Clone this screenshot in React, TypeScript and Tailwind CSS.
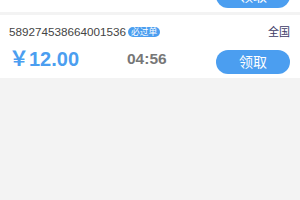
import React, { FC } from 'react'

type Order = {
  id: string
  area: string
  price: string
  time: string
}

const orders: Order[] = [
  { id: '589274538664001529', area: '全国', price: '15.00', time: '03:12' },
  { id: '589274538664001536', area: '全国', price: '12.00', time: '04:56' },
]

const OrderCard: FC<{ order: Order }> = ({ order }) => (
  <div className="bg-white h-[63px] pt-[10px] pl-[9px] pr-[10px] overflow-hidden">
    <div className="flex items-center h-[14px]">
      <span className="text-[11.7px] leading-none text-[#444]">{order.id}</span>
      <span className="ml-[2px] h-[10px] px-[3px] rounded-full bg-[#4b9ef0] text-white text-[8.7px] leading-[10px]">
        必过单
      </span>
      <span className="ml-auto text-[11px] leading-none text-[#3d3a66]">{order.area}</span>
    </div>
    <div className="flex items-start h-[24px] mt-[11px]">
      <div className="w-[118px] h-[20px] -mt-[1px] text-[20px] font-bold leading-[20px] text-[#4b9ef0]">
        ￥{order.price}
      </div>
      <div className="h-[16px] mt-[1px] text-[15.5px] font-bold leading-[16px] text-[#777]">{order.time}</div>
      <button className="ml-auto w-[74px] h-[24px] rounded-full bg-[#4b9ef0] text-white text-[14px] leading-none">
        领取
      </button>
    </div>
  </div>
)

const App: FC = () => {
  return (
    <div
      className="w-[300px] h-[200px] overflow-hidden bg-[#f3f3f3]"
      style={{ fontFamily: '"Liberation Sans", "Noto Sans CJK SC", sans-serif' }}
    >
      <div className="mt-[-51px] flex flex-col gap-[3px]">
        {orders.map((o) => (
          <OrderCard key={o.id} order={o} />
        ))}
      </div>
    </div>
  )
}

export default App
